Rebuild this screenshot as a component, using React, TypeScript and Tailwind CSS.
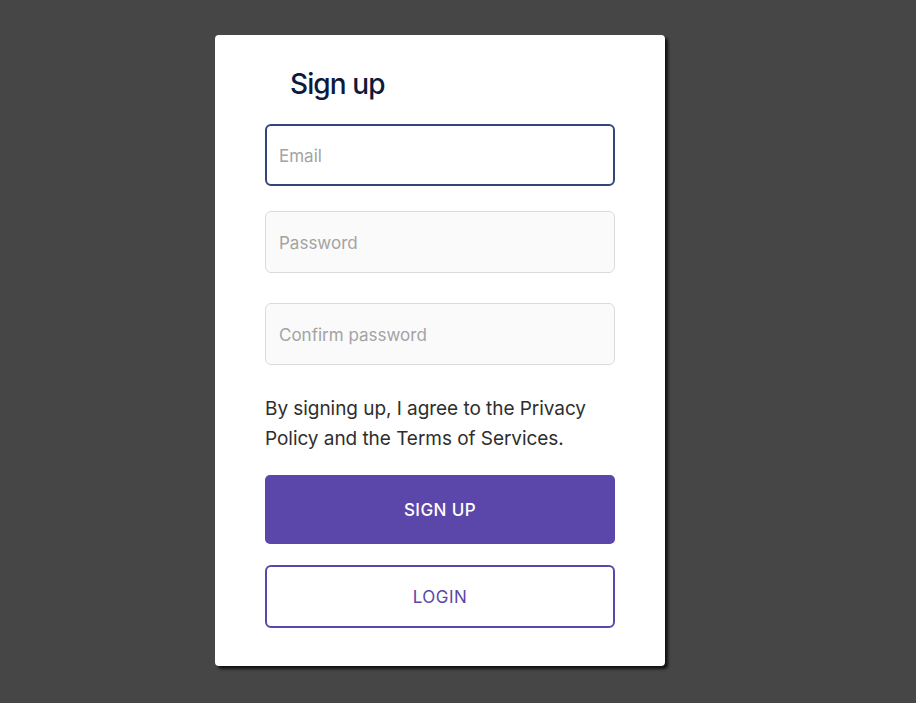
import React from "react";

export default function App() {
  const font = { fontFamily: "Inter, 'Noto Sans', sans-serif" };
  return (
    <div className="min-h-[703px] w-full bg-[#464647] flex justify-center pt-[35px] pr-[36px]" style={font}>
      <div className="w-[450px] h-[631px] bg-white rounded-[4px] shadow-[3px_3px_3px_rgba(0,0,0,0.75)] px-[50px] pt-[31px] flex flex-col">
        <h1 className="ml-[25px] text-[28px] leading-[36px] font-medium text-[#0d1a3d] tracking-[-0.9px]">Sign up</h1>
        <input
          className="mt-[22px] h-[62px] w-full rounded-[6px] border-2 border-[#34457e] bg-white px-[12px] pt-[2px] text-[17px] text-[#333] placeholder:text-[#a3a3a3] outline-none"
          placeholder="Email"
        />
        <input
          className="mt-[25px] h-[62px] w-full rounded-[6px] border border-[#dcdcdc] bg-[#fafafa] px-[13px] pt-[2px] text-[17px] text-[#333] placeholder:text-[#a3a3a3] outline-none"
          placeholder="Password"
          type="password"
        />
        <input
          className="mt-[30px] h-[62px] w-full rounded-[6px] border border-[#dcdcdc] bg-[#fafafa] px-[13px] pt-[2px] text-[17px] text-[#333] placeholder:text-[#a3a3a3] outline-none"
          placeholder="Confirm password"
          type="password"
        />
        <p className="mt-[29px] text-[19px] leading-[30px] text-[#2e2e2e] tracking-[-0.05px]">
          By signing up, I agree to the Privacy Policy and the Terms of Services.
        </p>
        <button className="mt-[21px] h-[69px] w-full rounded-[5px] bg-[#5b46a9] pt-[2px] text-white text-[17px] font-medium tracking-[0.4px]">
          SIGN UP
        </button>
        <button className="mt-[21px] h-[63px] w-full rounded-[6px] border-2 border-[#5b46a9] bg-white pt-[2px] text-[#5b46a9] text-[17px] tracking-[0.5px]">
          LOGIN
        </button>
      </div>
    </div>
  );
}
